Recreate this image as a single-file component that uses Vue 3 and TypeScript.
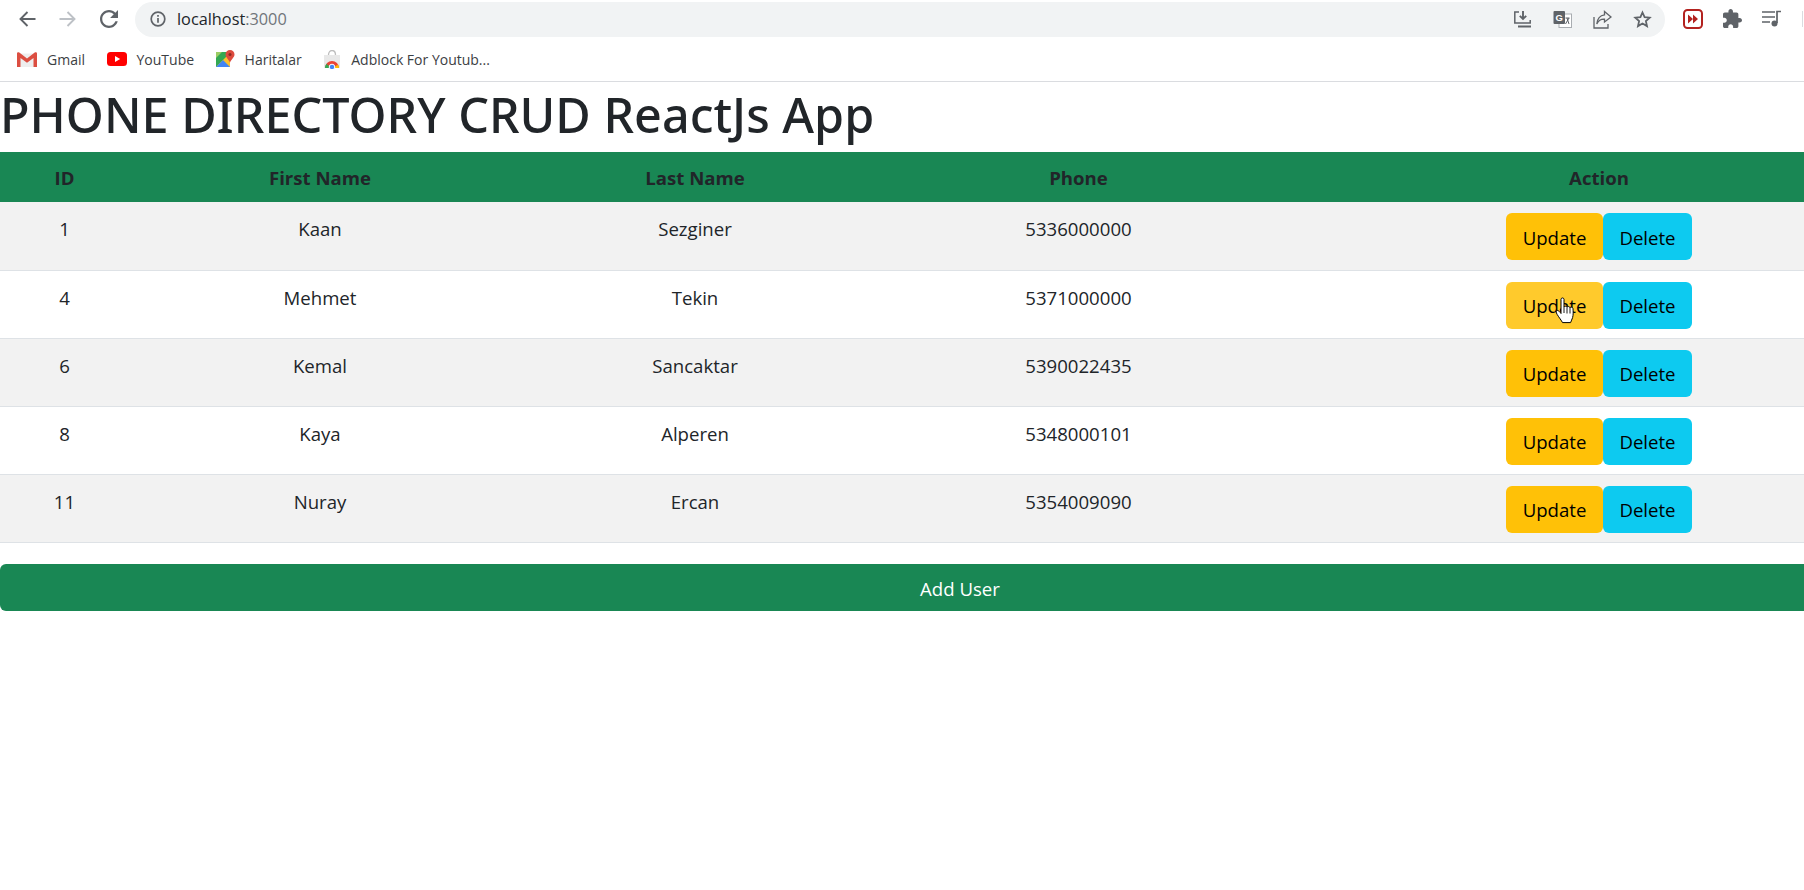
<script setup lang="ts">
interface Contact { id: number; first: string; last: string; phone: string }

const contacts: Contact[] = [
  { id: 1, first: 'Kaan', last: 'Sezginer', phone: '5336000000' },
  { id: 4, first: 'Mehmet', last: 'Tekin', phone: '5371000000' },
  { id: 6, first: 'Kemal', last: 'Sancaktar', phone: '5390022435' },
  { id: 8, first: 'Kaya', last: 'Alperen', phone: '5348000101' },
  { id: 11, first: 'Nuray', last: 'Ercan', phone: '5354009090' },
]

// row the mouse is resting on in the screenshot
const hoveredId = 4
</script>

<template>
  <div class="screen">
    <header class="chrome">
      <div class="toolbar">
        <div class="nav">
          <svg width="18" height="18" viewBox="0 0 18 18" fill="none" stroke="#5f6368" stroke-width="1.9"><path d="M17.5 9H2.5M9.5 2L2.5 9l7 7" /></svg>
          <svg width="18" height="18" viewBox="0 0 18 18" fill="none" stroke="#bdc1c6" stroke-width="1.9"><path d="M.5 9h15M8.5 2l7 7-7 7" /></svg>
          <svg width="18" height="18" viewBox="4 4 16 16" fill="#5f6368"><path d="M17.65 6.35C16.2 4.9 14.21 4 12 4c-4.42 0-7.99 3.58-7.99 8s3.57 8 7.99 8c3.73 0 6.84-2.55 7.73-6h-2.08c-.82 2.33-3.04 4-5.65 4-3.31 0-6-2.69-6-6s2.69-6 6-6c1.66 0 3.14.69 4.22 1.78L13 11h7V4l-2.35 2.35z" /></svg>
        </div>
        <div class="omnibox">
          <svg width="16" height="16" viewBox="0 0 16 16" fill="none" stroke="#5f6368" stroke-width="1.7"><circle cx="8" cy="8" r="6.8" /><path d="M8 7v4.8M8 4v1.8" /></svg>
          <span class="url">localhost<span class="port">:3000</span></span>
          <div class="omni-actions">
            <svg width="19" height="19" viewBox="0 0 19 19" fill="none" stroke="#5f6368" stroke-width="1.5"><path d="M6 2H1.8v11h15.4V10" /><path d="M10 1v7.5M6.8 5.8L10 9l3.2-3.2" stroke-width="1.9" /><path d="M5 15.5h13v2H5z" fill="#5f6368" stroke="none" /></svg>
            <svg width="19" height="19" viewBox="0 0 19 19"><rect x="6" y="4" width="12.5" height="13.5" fill="#fff" stroke="#a9adb1" /><rect x=".5" y="1" width="11.5" height="13" rx="1" fill="#5f6368" /><text x="2.6" y="11" font-size="9.5" font-weight="700" font-family="'Liberation Sans', sans-serif" fill="#fff">G</text><path d="M12.5 8h4M14 8l2 6M16 8l-3.5 6" fill="none" stroke="#5f6368" stroke-width="1" /></svg>
            <svg width="19" height="19" viewBox="0 0 19 19" fill="none" stroke="#5f6368" stroke-width="1.3"><path d="M1 7v11h14v-4" /><path d="M11.5 1.5L18 7l-6.500 5V9.200C8 9 5.500 10.500 3.800 14 4.300 9 7 5.500 11.500 4.900z" /></svg>
            <svg width="19" height="19" viewBox="0 0 19 19" fill="none" stroke="#5f6368" stroke-width="1.8" stroke-linejoin="miter"><path d="M9.500 2.500l2.100 4.700 5.100.5-3.800 3.400 1.100 5-4.500-2.600L5 16.100l1.100-5-3.800-3.400 5.100-.5z" /></svg>
          </div>
        </div>
        <div class="extensions">
          <svg width="20" height="20" viewBox="0 0 20 20"><rect x="1" y="1" width="18" height="18" rx="3.500" fill="#fff" stroke="#b3221f" stroke-width="2" /><path d="M5 5.500l5 4.500-5 4.500zM10 5.500l5 4.500-5 4.500z" fill="#b3221f" /></svg>
          <svg width="19" height="19" viewBox="2 1 21 21" fill="#5f6368"><path d="M20.500 11H19V7c0-1.100-.9-2-2-2h-4V3.500C13 2.120 11.880 1 10.500 1S8 2.120 8 3.500V5H4c-1.100 0-1.990.9-1.990 2v3.800H3.500c1.490 0 2.700 1.210 2.700 2.700s-1.210 2.700-2.700 2.700H2V20c0 1.100.9 2 2 2h3.800v-1.500c0-1.490 1.210-2.700 2.700-2.700 1.490 0 2.700 1.210 2.700 2.700V22H17c1.100 0 2-.9 2-2v-4h1.500c1.380 0 2.500-1.120 2.500-2.500S21.880 11 20.500 11z" /></svg>
          <svg width="20" height="18" viewBox="0 0 20 18" fill="none" stroke="#5f6368" stroke-width="1.700"><path d="M0 2h13M0 7h13M0 12h8" /><path d="M15 13V1.500h4" /><circle cx="12.500" cy="13.500" r="3" fill="#5f6368" stroke="none" /></svg>
          <span class="separator"></span>
        </div>
      </div>
      <div class="bookmarks">
        <span class="bookmark">
          <svg width="20" height="15" viewBox="0 0 20 15"><path d="M0 1.500h20V15H0z" fill="#eee" /><path d="M0 1.500c0-1.200 1.300-1.800 2.300-1L10 6.500 17.700.5c1-.8 2.300-.2 2.300 1V15h-3.500V5.900L10 10.800 3.500 5.900V15H0z" fill="#dc4e41" /></svg>
          Gmail
        </span>
        <span class="bookmark">
          <svg width="20" height="14" viewBox="0 0 20 14"><rect width="20" height="14" rx="3.500" fill="#f00" /><path d="M8 4l5.200 3L8 10z" fill="#fff" /></svg>
          YouTube
        </span>
        <span class="bookmark">
          <svg width="19" height="19" viewBox="0 0 19 19"><path d="M0 2h14v15H0z" fill="#34a853" /><path d="M0 17L14 3v14z" fill="#fbc02d" /><path d="M0 17l7-7 7 7z" fill="#4285f4" /><path d="M0 2h6L0 8z" fill="#9ccc65" /><path d="M14 0a4.500 4.500 0 0 1 4.500 4.500c0 2.800-3 4.500-4.500 8-1.500-3.500-4.500-5.200-4.500-8A4.500 4.500 0 0 1 14 0z" fill="#dd4b3e" /><circle cx="14" cy="4.500" r="1.500" fill="#8a2a22" /></svg>
          Haritalar
        </span>
        <span class="bookmark">
          <svg width="18" height="19" viewBox="0 0 18 19"><path d="M1 5h16v13H1z" fill="#e8e8e8" /><path d="M5.500 5c0-6 7-6 7 0" fill="none" stroke="#bdbdbd" stroke-width="1.300" /><path d="M2 18a7 7 0 0 1 14 0z" fill="#ea4335" /><path d="M2 18a7 7 0 0 1 1.500-4.300L8 18z" fill="#34a853" /><path d="M16 18a7 7 0 0 0-1-3.600L10 18z" fill="#fbbc05" /><circle cx="9" cy="17" r="2.800" fill="#4285f4" stroke="#fff" /></svg>
          Adblock For Youtub...
        </span>
      </div>
    </header>
    <main class="page">
      <h1>PHONE DIRECTORY CRUD ReactJs App</h1>
      <table>
        <colgroup>
          <col class="col-id"><col class="col-first"><col class="col-last"><col class="col-phone"><col class="col-action">
        </colgroup>
        <thead>
          <tr>
            <th>ID</th><th>First Name</th><th>Last Name</th><th>Phone</th><th>Action</th>
          </tr>
        </thead>
        <tbody>
          <tr v-for="c in contacts" :key="c.id">
            <td>{{ c.id }}</td>
            <td>{{ c.first }}</td>
            <td>{{ c.last }}</td>
            <td>{{ c.phone }}</td>
            <td>
              <div class="actions">
                <button class="btn update" :class="{ hover: c.id === hoveredId }">
                  Update
                  <svg v-if="c.id === hoveredId" class="cursor" width="22" height="27" viewBox="0 0 22 27"><path d="M6 2.300c0-1.800 3-1.800 3 0V10c0-1 2.800-1.200 3 .3 0-1 2.800-1.200 3 .5 .2-1 2.800-1 3 .8.200 3 .4 6-.4 9-.5 2-1.500 3-2 5H7.500C6.500 23.500 4 20.500 2.200 17.500c-1.500-2.500-1.200-4 .3-4 1 0 2.500 1.500 3.500 3z" fill="#fff" stroke="#000" stroke-width="1" /><path d="M9 10v6M12 10.500v6M15 11v5.500" fill="none" stroke="#000" stroke-width=".9" /></svg>
                </button>
                <button class="btn delete">Delete</button>
              </div>
            </td>
          </tr>
        </tbody>
      </table>
      <button class="btn add">Add User</button>
    </main>
  </div>
</template>

<style>
html, body { overflow: hidden; background: #fff; }
</style>

<style scoped>
.screen { width: 1804px; height: 890px; overflow: hidden; font-family: "Open Sans", "Noto Sans", sans-serif; color: #212529; }
.chrome { height: 81px; border-bottom: 1px solid #dadce0; }
.toolbar { display: flex; align-items: center; height: 37px; }
.nav { display: flex; gap: 23px; padding-left: 18px; margin-right: 17px; }
.omnibox { display: flex; align-items: center; gap: 11px; width: 1530px; height: 35px; margin-top: 1px; padding: 0 13px 0 15px; border-radius: 18px; background: #f1f3f4; box-sizing: border-box; }
.url { font-size: 16.3px; }
.port { color: #70757a; }
.omni-actions { display: flex; gap: 21px; margin-left: auto; }
.extensions { display: flex; align-items: center; gap: 20px; margin-left: 18px; }
.separator { width: 1px; height: 16px; background: #dadce0; }
.bookmarks { display: flex; gap: 21.5px; height: 44px; align-items: center; padding-left: 17px; font-size: 14px; color: #3c4043; }
.bookmark { display: flex; align-items: center; gap: 10px; }
.page { width: 1920px; }
h1 { margin: 0; font-family: "Noto Sans", "Open Sans", sans-serif; font-size: 48.5px; line-height: 64px; padding-bottom: 6px; font-weight: 500; }
table { width: 1920px; table-layout: fixed; border-collapse: collapse; font-size: 18.6px; }
.col-id { width: 129px; }
.col-first { width: 382px; }
.col-last { width: 368px; }
.col-phone { width: 399px; }
th { height: 50px; padding: 0; background: #198754; font-weight: 700; }
td { height: 68px; padding: 11px 10px 0; line-height: 32px; vertical-align: top; text-align: center; border-bottom: 1px solid #dee2e6; box-sizing: border-box; }
tbody tr:nth-child(odd) td { background: #f2f2f2; }
.actions { display: flex; justify-content: center; }
.btn { position: relative; height: 47px; padding: 2px 0 0; border: 0; border-radius: 6px; font: inherit; font-size: 18.6px; color: #000; }
.update { width: 97px; background: #ffc107; }
.update.hover { background: #ffca2c; }
.delete { width: 89px; background: #0dcaf0; }
.cursor { position: absolute; left: 49px; top: 15px; }
.add { display: block; width: 1920px; margin-top: 21px; background: #198754; color: #fff; }
</style>
